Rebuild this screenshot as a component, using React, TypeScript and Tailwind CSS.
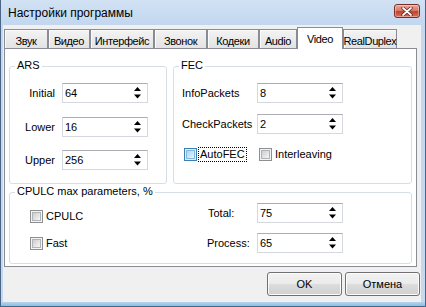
import React from "react";

function Arrows() {
  return (
    <svg width="7" height="12" viewBox="0 0 7 12" className="block shrink-0">
      <polygon points="3.5,0 7,4 0,4" fill="#000" />
      <polygon points="0,7.5 7,7.5 3.5,11.5" fill="#000" />
    </svg>
  );
}

function Spin({ value }: { value: string }) {
  return (
    <div className="w-[86px] h-[20px] border border-[#d5d9df] border-t-[#abadb3] bg-white flex items-center pl-[2px] pr-[6px] shrink-0">
      <span className="flex-1 leading-[13px]">{value}</span>
      <Arrows />
    </div>
  );
}

function Check({ hover }: { hover?: boolean }) {
  return hover ? (
    <div className="w-[13px] h-[13px] border border-[#3c7fb1] bg-[#deeefa] p-[1px] shrink-0">
      <div className="w-full h-full bg-[linear-gradient(135deg,#aed3f3,#e8f4fd)] border border-[#86b8de]" />
    </div>
  ) : (
    <div className="w-[13px] h-[13px] border border-[#8e8f8f] bg-[#f4f4f4] p-[1px] shrink-0">
      <div className="w-full h-full bg-[linear-gradient(135deg,#cdcdcd,#f6f6f6)] border border-[#b0b3b8]" />
    </div>
  );
}

function Group({
  label,
  className,
  children,
}: {
  label: string;
  className: string;
  children: React.ReactNode;
}) {
  return (
    <div className={"relative border border-[#d5dfe5] rounded-[3px] shrink-0 " + className}>
      <span className="absolute top-[-8px] left-[5px] px-[2px] bg-white leading-[13px] whitespace-nowrap">{label}</span>
      {children}
    </div>
  );
}

const tabs: { t: string; w: string; sel?: boolean }[] = [
  { t: "Звук", w: "w-[44px]" },
  { t: "Видео", w: "w-[42px]" },
  { t: "Интерфейс", w: "w-[64px]" },
  { t: "Звонок", w: "w-[53px]" },
  { t: "Кодеки", w: "w-[52px]" },
  { t: "Audio", w: "w-[38px]" },
  { t: "Video", w: "w-[46px]", sel: true },
  { t: "RealDuplex", w: "w-[54px]" },
];

function Btn({ children }: { children: React.ReactNode }) {
  return (
    <div className="w-[75px] h-[24px] rounded-[3px] border border-[#707070] shadow-[inset_0_0_0_1px_#fcfcfc] bg-[linear-gradient(to_bottom,#f2f2f2_0%,#ebebeb_50%,#dddddd_50%,#cfcfcf_100%)] flex items-center justify-center leading-[13px]">
      {children}
    </div>
  );
}

export default function App() {
  return (
    <div className="w-[426px] h-[307px] overflow-hidden bg-[#c4d8ef] border-l border-r border-b border-[#4a6585] flex flex-col font-['Liberation_Sans',Arial,sans-serif] text-[11px] text-black">
      {/* title bar */}
      <div className="h-[25px] flex items-start bg-[linear-gradient(to_bottom,#d2e2f4,#c2d6ee)] shrink-0">
        <span className="ml-[7px] mt-[6px] text-[12px] leading-[15px]">Настройки программы</span>
        <div className="ml-auto mr-[5px] mt-[4px] w-[26px] h-[14px] rounded-[3px] border border-[#7b2d22] bg-[linear-gradient(to_bottom,#e4a89c_0%,#d67c6c_45%,#c2412d_55%,#d6705c_100%)] shadow-[inset_0_0_0_1px_rgba(255,255,255,0.35)] flex items-center justify-center">
          <svg width="12" height="9" viewBox="0 0 12 9">
            <path d="M2 1 L10 8 M10 1 L2 8" stroke="#5a1a10" strokeWidth="3.2" strokeLinecap="round" />
            <path d="M2 1 L10 8 M10 1 L2 8" stroke="#ffffff" strokeWidth="1.8" strokeLinecap="round" />
          </svg>
        </div>
      </div>

      {/* client */}
      <div className="ml-[2px] w-[418px] h-[277px] bg-[#f0f0f0] flex flex-col shrink-0">
        {/* tabs */}
        <div className="mt-[2px] ml-[1px] h-[21px] flex items-end shrink-0 tracking-[-0.4px]">
          {tabs.map((tb) =>
            tb.sel ? (
              <div
                key={tb.t}
                className={tb.w + " h-[22px] mb-[-1px] relative z-10 bg-white border border-b-0 border-[#898c95] flex justify-center pt-[5px] leading-[13px] whitespace-nowrap"}
              >
                {tb.t}
              </div>
            ) : (
              <div
                key={tb.t}
                className={tb.w + " h-[19px] bg-[linear-gradient(to_bottom,#f3f3f3,#e3e3e3)] shadow-[inset_1px_1px_0_#fbfbfb] border border-b-0 border-[#898c95] flex justify-center pt-[5px] leading-[13px] whitespace-nowrap"}
              >
                {tb.t}
              </div>
            )
          )}
        </div>

        {/* panel */}
        <div className="ml-[1px] w-[413px] h-[219px] border border-[#898c95] bg-white flex flex-col shrink-0">
          <div className="mt-[17px] ml-[4px] flex gap-[6px]">
            <Group label="ARS" className="w-[158px] h-[118px]">
              <div className="flex flex-col pt-[16px]">
                <div className="flex items-center">
                  <span className="w-[45px] text-right leading-[13px]">Initial</span>
                  <div className="ml-[7px]"><Spin value="64" /></div>
                </div>
                <div className="flex items-center mt-[14px]">
                  <span className="w-[45px] text-right leading-[13px]">Lower</span>
                  <div className="ml-[7px]"><Spin value="16" /></div>
                </div>
                <div className="flex items-center mt-[13px]">
                  <span className="w-[45px] text-right leading-[13px]">Upper</span>
                  <div className="ml-[7px]"><Spin value="256" /></div>
                </div>
              </div>
            </Group>
            <Group label="FEC" className="w-[239px] h-[118px]">
              <div className="flex flex-col pt-[16px] pl-[8px]">
                <div className="flex items-center">
                  <span className="w-[75px] leading-[13px]">InfoPackets</span>
                  <Spin value="8" />
                </div>
                <div className="flex items-center mt-[11px]">
                  <span className="w-[75px] leading-[13px]">CheckPackets</span>
                  <Spin value="2" />
                </div>
                <div className="flex items-center mt-[13px] ml-[2px]">
                  <div className="w-[75px] flex items-center">
                    <Check hover />
                    <span className="ml-[1px] px-[1px] border border-dotted border-[#000] leading-[13px]">AutoFEC</span>
                  </div>
                  <Check />
                  <span className="ml-[3px] leading-[13px]">Interleaving</span>
                </div>
              </div>
            </Group>
          </div>
          <div className="mt-[8px] ml-[4px] flex">
            <Group label="CPULC max parameters, %" className="w-[403px] h-[72px]">
              <div className="flex">
                <div className="w-[197px] pl-[20px] pt-[17px] flex flex-col">
                  <div className="flex items-center">
                    <Check />
                    <span className="ml-[3px] leading-[13px]">CPULC</span>
                  </div>
                  <div className="flex items-center mt-[14px]">
                    <Check />
                    <span className="ml-[3px] leading-[13px]">Fast</span>
                  </div>
                </div>
                <div className="pt-[10px] flex flex-col">
                  <div className="flex items-center">
                    <span className="w-[50px] pl-[1px] leading-[13px]">Total:</span>
                    <Spin value="75" />
                  </div>
                  <div className="flex items-center mt-[10px]">
                    <span className="w-[50px] leading-[13px]">Process:</span>
                    <Spin value="65" />
                  </div>
                </div>
              </div>
            </Group>
          </div>
        </div>

        {/* buttons */}
        <div className="mt-[5px] pr-[1px] flex justify-end gap-[3px]">
          <Btn>OK</Btn>
          <Btn>Отмена</Btn>
        </div>
      </div>

      {/* bottom frame */}
      <div className="flex-1 bg-[linear-gradient(to_bottom,#b9d3ee,#7fc3ea)]" />
    </div>
  );
}
